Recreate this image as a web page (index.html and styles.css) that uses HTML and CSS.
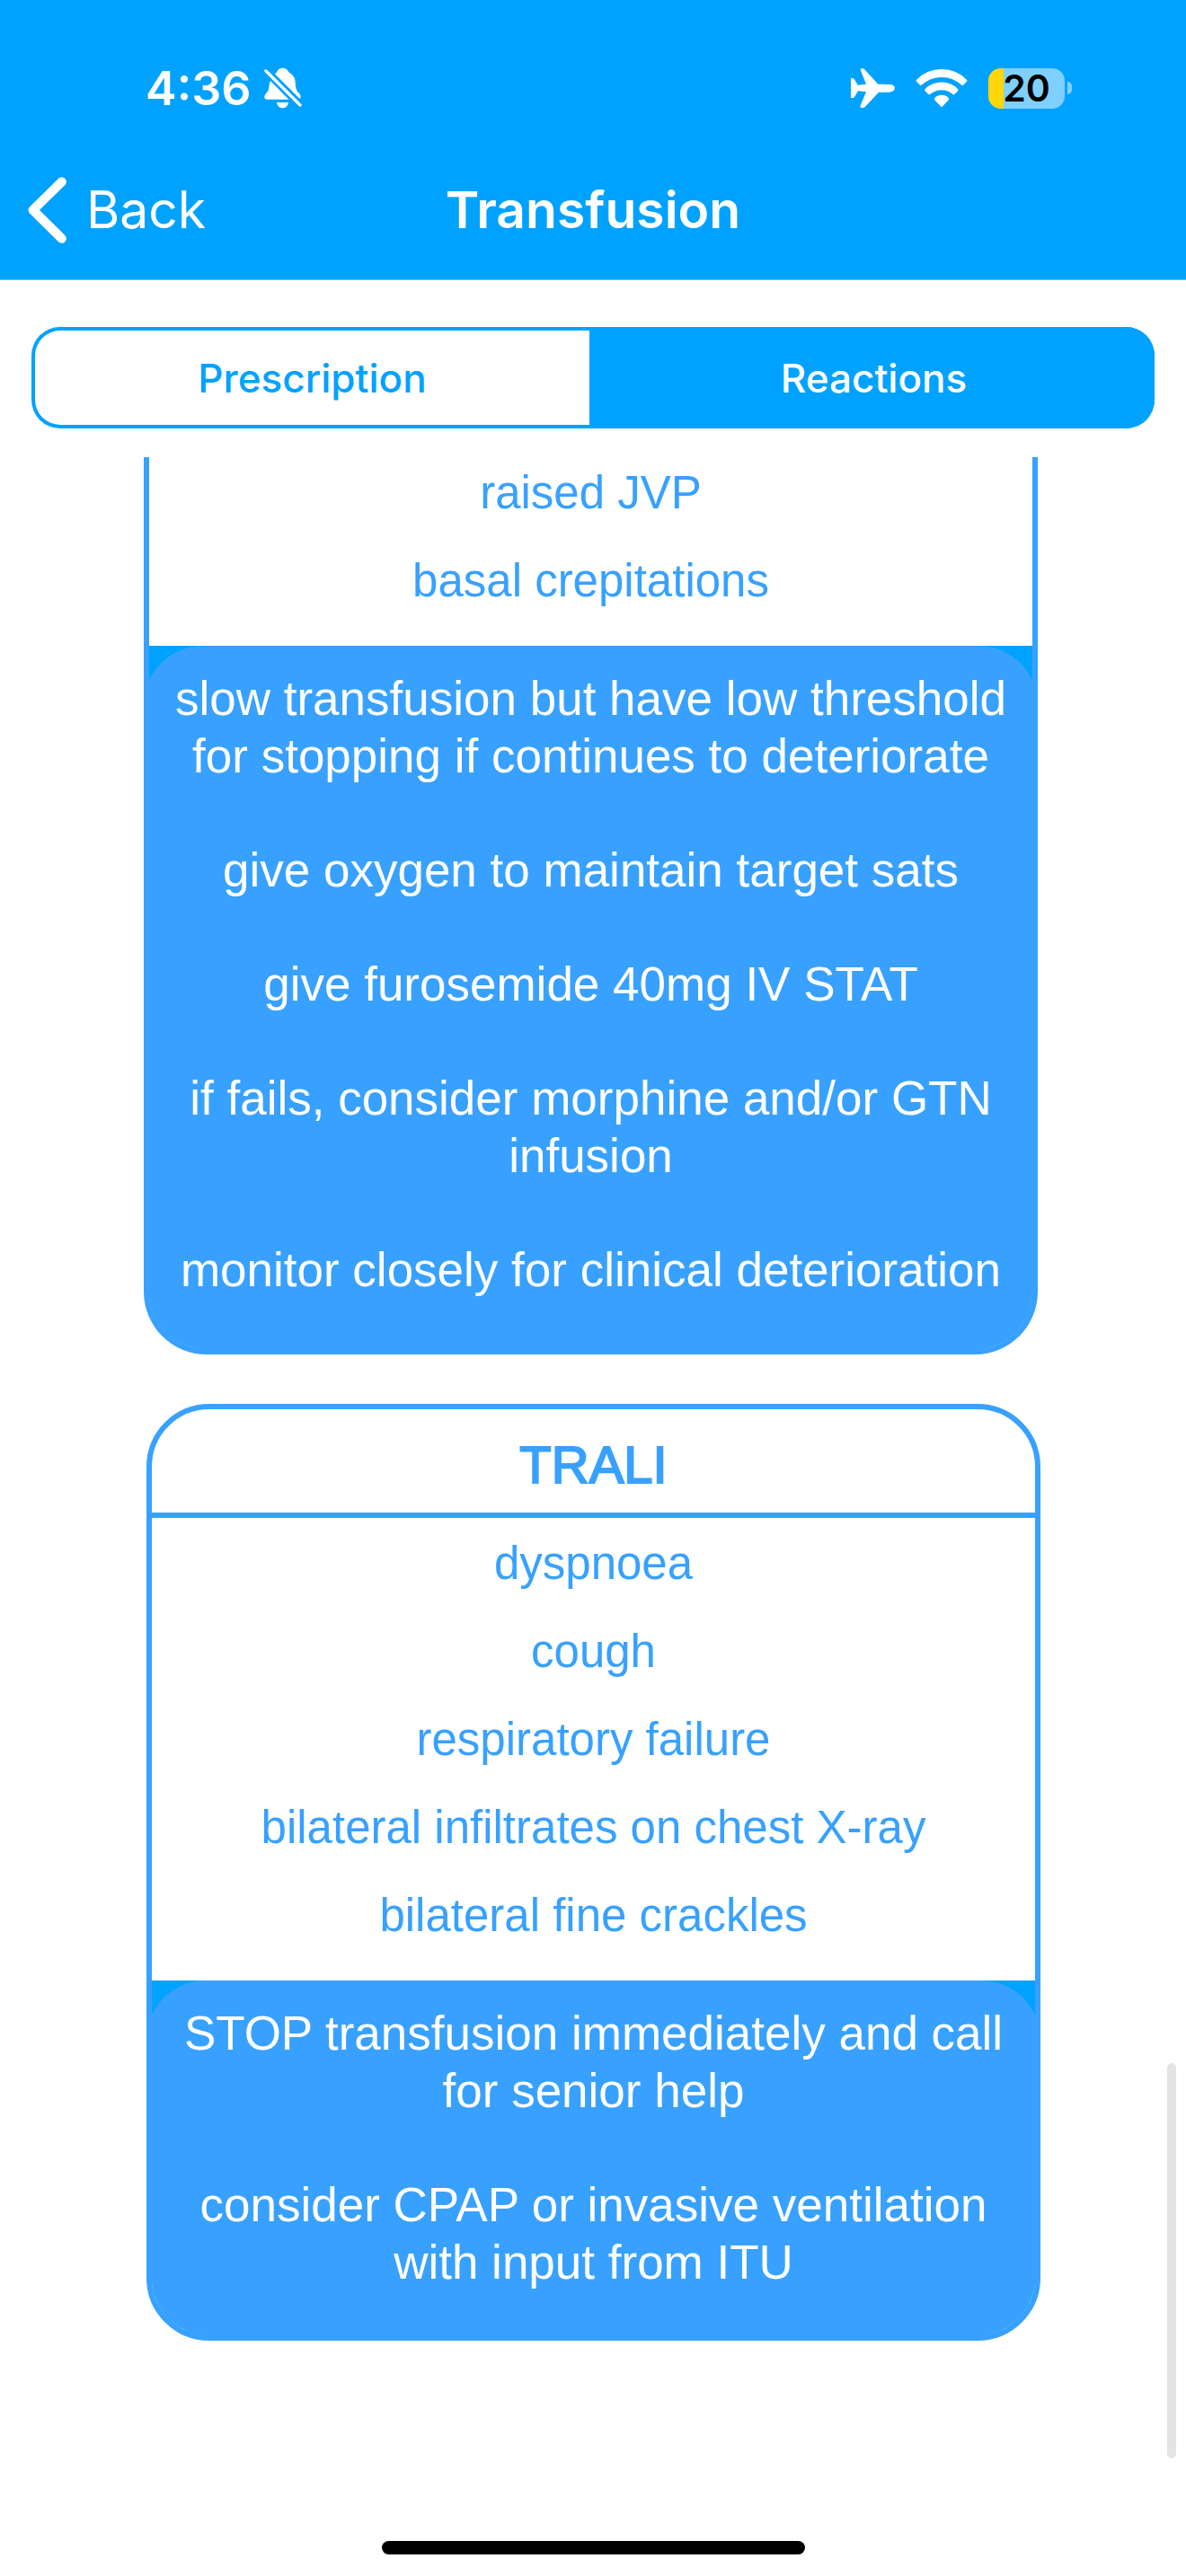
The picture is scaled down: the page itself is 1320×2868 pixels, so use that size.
FILE: index.html
```html
<!DOCTYPE html>
<html lang="en">
<head>
<meta charset="utf-8">
<meta name="viewport" content="width=device-width, initial-scale=1">
<title>Transfusion</title>
<link rel="stylesheet" href="styles.css">
</head>
<body>
<header class="header">
  <div class="status">
    <div class="status-group">
      <span class="time">4:36</span>
      <svg class="icon-bell" viewBox="881 106 127 137" aria-hidden="true">
        <path d="M917 127Q924 123 925 118Q930 107 943 107Q956 107 962 118Q963 122 968 124Q985 134 986 158Q987 180 994 187Q1004 195 1004 203Q1004 209 1000 210Z"/>
        <path d="M902 150L964 213H888Q882 212 882 205Q882 198 888 192Q897 184 897 172Q898 158 902 150Z"/>
        <path d="M923 223H963Q959 242 943 242Q927 242 923 223Z"/>
        <path class="stroke" d="M887 117L1002 232"/>
      </svg>
    </div>
    <div class="status-group status-group--right">
      <svg class="icon-plane" viewBox="141 78 147 132" aria-hidden="true">
        <path d="M288 144Q286 132 270 132L232 131L188 83Q184 78 176 79Q171 80 174 86L192 131L164 134L153 115Q151 111 143 111H141V177H147Q151 177 153 174L165 154L192 157L172 205Q171 210 176 210H181Q186 210 189 206L234 158H270Q286 156 288 144Z"/>
      </svg>
      <svg class="icon-wifi" viewBox="359 75 174 127" aria-hidden="true">
        <path d="M361 111Q396 75 446 75Q496 75 531 111Q533 114 531 116L519 129Q517 131 514 129Q485 102 446 102Q407 102 378 129Q375 131 373 129L361 116Q359 114 361 111Z"/>
        <path d="M390 142Q413 119 446 119Q479 119 501 142Q503 145 501 148L489 160Q487 162 484 160Q468 145 446 145Q424 145 407 160Q404 162 402 160L390 148Q388 145 390 142Z"/>
        <path d="M422 173Q430 162 446 162Q462 162 470 173Q472 176 469 179L448 201Q446 203 444 201L423 179Q420 176 422 173Z"/>
      </svg>
      <div class="battery"><span class="battery-level">20</span><span class="battery-cap"></span></div>
    </div>
  </div>
  <nav class="nav">
    <a class="back" href="#back">
      <svg class="icon-back" viewBox="93 470 130 223" aria-hidden="true"><path d="M207 486L110 581L207 677"/></svg>
      Back
    </a>
    <h1 class="title">Transfusion</h1>
  </nav>
</header>

<div class="segments" role="tablist">
  <button class="segment" type="button" role="tab" aria-selected="false">Prescription</button>
  <button class="segment segment--active" type="button" role="tab" aria-selected="true">Reactions</button>
</div>

<main class="content">
  <section class="card card--continued">
    <ul class="symptoms">
      <li>raised JVP</li>
      <li>basal crepitations</li>
    </ul>
    <div class="actions">
      <div class="actions-panel">
        <p>slow transfusion but have low threshold for stopping if continues to deteriorate</p>
        <p>give oxygen to maintain target sats</p>
        <p>give furosemide 40mg IV STAT</p>
        <p>if fails, consider morphine and/or GTN infusion</p>
        <p>monitor closely for clinical deterioration</p>
      </div>
    </div>
  </section>

  <section class="card">
    <h2 class="card-title">TRALI</h2>
    <ul class="symptoms">
      <li>dyspnoea</li>
      <li>cough</li>
      <li>respiratory failure</li>
      <li>bilateral infiltrates on chest X-ray</li>
      <li>bilateral fine crackles</li>
    </ul>
    <div class="actions">
      <div class="actions-panel">
        <p>STOP transfusion immediately and call for senior help</p>
        <p>consider CPAP or invasive ventilation with input from ITU</p>
      </div>
    </div>
  </section>
  <div class="scroll-thumb"></div>
</main>

<footer class="footer"><div class="home-indicator"></div></footer>
</body>
</html>
```
FILE: styles.css
```css
:root {
  --brand: #00a2ff;
  --card: #38a1ff;
}

* { box-sizing: border-box; }

body {
  margin: 0;
  min-height: 100vh;
  display: flex;
  flex-direction: column;
  background: #fff;
  font-family: Inter, "Liberation Sans", sans-serif;
}

h1, h2, p, ul { margin: 0; padding: 0; }

/* Header */
.header {
  padding-top: 40px;
  background: var(--brand);
  border-bottom: 1px solid #a8b4bd;
  color: #fff;
}

.status {
  display: flex;
  justify-content: space-between;
  height: 116px;
  padding: 0 127px 0 162px;
}

.status-group { display: flex; align-items: center; gap: 14px; }
.status-group--right { gap: 23px; }

.time { font-size: 52px; font-weight: 600; }

svg { fill: #fff; flex: none; }
.icon-bell { width: 42px; height: 46px; }
.icon-bell .stroke { stroke: #fff; stroke-width: 10; stroke-linecap: round; }
.icon-plane { width: 49px; height: 44px; }
.icon-wifi { width: 58px; height: 42px; }

.battery {
  position: relative;
  display: flex;
  align-items: center;
  justify-content: center;
  width: 85px;
  height: 45px;
  margin-right: 8px;
  border-radius: 14px;
  background: linear-gradient(to right, #ffd60a 20%, #80d0ff 20%);
  color: #000;
  font-size: 41px;
  font-weight: 600;
}

.battery-cap {
  position: absolute;
  left: 88px;
  width: 5px;
  height: 14px;
  border-radius: 0 5px 5px 0;
  background: #80d0ff;
}

.nav {
  display: grid;
  grid-template-columns: 1fr auto 1fr;
  align-items: center;
  height: 155px;
  padding: 0 31px;
}

.back {
  display: flex;
  align-items: center;
  gap: 22px;
  color: #fff;
  font-size: 57px;
  text-decoration: none;
}

.icon-back {
  width: 43px;
  height: 74px;
  fill: none;
  stroke: #fff;
  stroke-width: 31;
  stroke-linecap: round;
  stroke-linejoin: round;
}

.title { font-size: 57px; font-weight: 600; }

/* Segmented control */
.segments {
  display: flex;
  height: 113px;
  margin: 52px 35px 32px;
}

.segment {
  flex: 1;
  padding: 0;
  border: 0;
  border-radius: 32px 0 0 32px;
  background: #fff;
  box-shadow: inset 0 0 0 4px var(--brand);
  color: var(--brand);
  font: 500 44px Inter, "Liberation Sans", sans-serif;
}

.segment--active {
  border-radius: 0 32px 32px 0;
  background: var(--brand);
  color: #fff;
}

/* Reaction cards */
.content {
  position: relative;
  flex: 1;
  display: flex;
  flex-direction: column;
  gap: 55px;
  padding: 0 162px 0 160px;
  font-family: "Liberation Sans", Arial, sans-serif;
  text-align: center;
}

.card {
  margin-left: 3px;
  border: 6px solid var(--card);
  border-radius: 70px;
  overflow: hidden;
  color: var(--card);
}

.card--continued {
  margin: 0 3px 0 0;
  border-top: 0;
  border-radius: 0 0 70px 70px;
}

/* Outlined regular weight gives the title a medium weight */
.card-title {
  padding: 26px 20px 17px;
  border-bottom: 6px solid var(--card);
  font-size: 58px;
  font-weight: 400;
  line-height: 72px;
  -webkit-text-stroke: 2px var(--card);
}

.symptoms {
  display: flex;
  flex-direction: column;
  gap: 36px;
  padding: 20px 20px 41px;
  list-style: none;
  font-size: 51px;
  line-height: 62px;
}

.card--continued .symptoms { padding-top: 9px; }

.actions { background: var(--brand); }

.actions-panel {
  display: flex;
  flex-direction: column;
  gap: 63px;
  margin: 0 -6px;
  padding: 27px 26px 49px;
  border-radius: 66px 66px 0 0;
  background: var(--card);
  color: #fff;
  font-size: 53px;
  line-height: 64px;
}

.card--continued .actions-panel { padding-bottom: 56px; }

.scroll-thumb {
  position: absolute;
  right: 11px;
  bottom: 92px;
  width: 10px;
  height: 440px;
  border-radius: 5px;
  background: #e4e4e4;
}

.footer {
  display: flex;
  justify-content: center;
  padding-bottom: 24px;
}

.home-indicator {
  width: 471px;
  height: 15px;
  border-radius: 8px;
  background: #000;
}
```
